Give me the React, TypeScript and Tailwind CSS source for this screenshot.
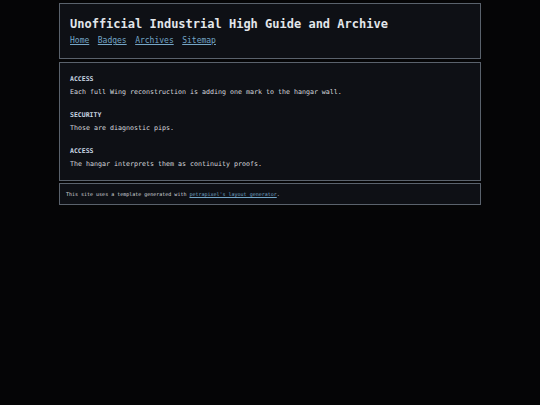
import React from "react";

const mono = "font-['DejaVu_Sans_Mono','Liberation_Mono',monospace]";

const entries = [
  { label: "ACCESS", text: "Each full Wing reconstruction is adding one mark to the hangar wall." },
  { label: "SECURITY", text: "Those are diagnostic pips." },
  { label: "ACCESS", text: "The hangar interprets them as continuity proofs." },
];

export default function App() {
  return (
    <div className={`min-h-[405px] bg-[#050506] pt-[3px] text-[#d6d9dd] ${mono}`}>
      <div className="mx-auto flex w-[422px] flex-col">
        <header className="border border-[#5a626c] bg-[#0e1015] px-[10px] pt-[12px] pb-[12px]">
          <h1 className="text-[12px] font-bold leading-[16px] text-[#e2e6ea]">Unofficial Industrial High Guide and Archive</h1>
          <nav className="mt-[4px] flex gap-[8.5px] text-[8px] leading-[10px]">
            <a href="#" className="text-[#74a6c7] underline">Home</a>
            <a href="#" className="text-[#74a6c7] underline">Badges</a>
            <a href="#" className="text-[#74a6c7] underline">Archives</a>
            <a href="#" className="text-[#74a6c7] underline">Sitemap</a>
          </nav>
        </header>
        <main className="mt-[3px] flex flex-col gap-[14px] border border-[#5a626c] bg-[#0e1015] px-[10px] pt-[12px] pb-[11px]">
          {entries.map((e, i) => (
            <section key={i}>
              <h2 className="text-[6.5px] font-semibold leading-[9px] text-[#c9d6e3]">{e.label}</h2>
              <p className="mt-[4px] text-[6.65px] leading-[9px]">{e.text}</p>
            </section>
          ))}
        </main>
        <footer className="mt-[2px] border border-[#5a626c] bg-[#0e1015] px-[6px] py-[6px] text-[5px] leading-[8px]">
          This site uses a template generated with{" "}
          <a href="#" className="text-[#74a6c7] underline">petrapixel's layout generator</a>.
        </footer>
      </div>
    </div>
  );
}
